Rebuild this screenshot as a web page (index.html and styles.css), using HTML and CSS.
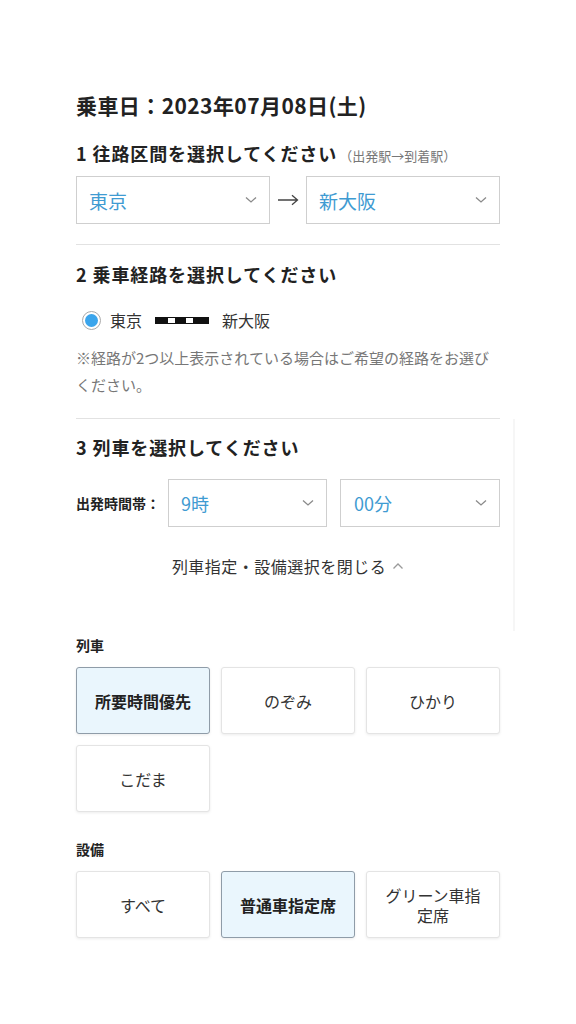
FILE: index.html
```html
<!DOCTYPE html>
<html lang="ja">
<head>
<meta charset="utf-8">
<title>列車選択</title>
<link rel="stylesheet" href="styles.css">
</head>
<body>
<div class="page">
  <h1 class="date">乗車日：2023年07月08日(土)</h1>

  <section class="sec sec1">
    <h2 class="heading">1 往路区間を選択してください<span class="sub">（出発駅→到着駅）</span></h2>
    <div class="route-select">
      <div class="select wide"><span class="val">東京</span><svg class="chev" viewBox="0 0 12 8" width="12" height="8"><path d="M1 1.5 L6 6 L11 1.5" fill="none" stroke="#8a8a8a" stroke-width="1.3"/></svg></div>
      <div class="arrow"><svg viewBox="0 0 22 12" width="22" height="12"><path d="M1 6 H20 M15 1.2 L20.5 6 L15 10.8" fill="none" stroke="#444" stroke-width="1.3"/></svg></div>
      <div class="select wide"><span class="val">新大阪</span><svg class="chev" viewBox="0 0 12 8" width="12" height="8"><path d="M1 1.5 L6 6 L11 1.5" fill="none" stroke="#8a8a8a" stroke-width="1.3"/></svg></div>
    </div>
  </section>

  <section class="sec sec2">
    <h2 class="heading">2 乗車経路を選択してください</h2>
    <div class="radio-row">
      <span class="radio"><span class="dot"></span></span>
      <span class="st">東京</span>
      <svg class="line" viewBox="0 0 54 7" width="54" height="7"><rect x="0.5" y="0.5" width="53" height="6" fill="#fff" stroke="#111"/><rect x="0" y="0" width="13" height="7" fill="#111"/><rect x="20" y="0" width="11" height="7" fill="#111"/><rect x="38" y="0" width="16" height="7" fill="#111"/></svg>
      <span class="st">新大阪</span>
    </div>
    <p class="note">※経路が2つ以上表示されている場合はご希望の経路をお選びください。</p>
  </section>

  <section class="sec sec3">
    <h2 class="heading">3 列車を選択してください</h2>
    <div class="time-row">
      <span class="time-label">出発時間帯：</span>
      <div class="select t1"><span class="val">9時</span><svg class="chev" viewBox="0 0 12 8" width="12" height="8"><path d="M1 1.5 L6 6 L11 1.5" fill="none" stroke="#8a8a8a" stroke-width="1.3"/></svg></div>
      <div class="select t2"><span class="val">00分</span><svg class="chev" viewBox="0 0 12 8" width="12" height="8"><path d="M1 1.5 L6 6 L11 1.5" fill="none" stroke="#8a8a8a" stroke-width="1.3"/></svg></div>
    </div>
    <div class="toggle">列車指定・設備選択を閉じる<svg class="caret" viewBox="0 0 12 8" width="12" height="8"><path d="M1.5 6.5 L6 2 L10.5 6.5" fill="none" stroke="#9a9a9a" stroke-width="1.3"/></svg></div>
  </section>

  <div class="group g1">
    <div class="glabel">列車</div>
    <div class="grid">
      <div class="opt on">所要時間優先</div>
      <div class="opt">のぞみ</div>
      <div class="opt">ひかり</div>
      <div class="opt">こだま</div>
    </div>
  </div>

  <div class="group g2">
    <div class="glabel">設備</div>
    <div class="grid">
      <div class="opt">すべて</div>
      <div class="opt on">普通車指定席</div>
      <div class="opt">グリーン車指定席</div>
    </div>
  </div>
</div>
</body>
</html>
```

FILE: styles.css
```css
* { box-sizing: border-box; }
html, body { margin: 0; padding: 0; background: #fff; }
body {
  font-family: "Noto Sans CJK JP", "Noto Sans", sans-serif;
  color: #333;
}
.page {
  width: 576px;
  padding: 90px 76px 60px;
}
.date {
  margin: 0;
  font-size: 21px;
  line-height: 30px;
  font-weight: 700;
  color: #222;
  letter-spacing: 0.02em;
}
.sec { margin: 0; }
.heading {
  margin: 0;
  font-size: 18px;
  line-height: 26px;
  font-weight: 700;
  color: #222;
  letter-spacing: 0.05em;
}
.sub {
  font-size: 13px;
  font-weight: 400;
  color: #777;
  letter-spacing: 0;
  margin-left: 2px;
}
.sec1 { padding-top: 20px; padding-bottom: 20px; border-bottom: 1px solid #e2e2e2; }
.route-select {
  display: flex;
  align-items: center;
  margin-top: 7px;
}
.select {
  height: 48px;
  border: 1px solid #cfcfcf;
  display: flex;
  align-items: center;
  justify-content: space-between;
  padding: 0 12px 0 12px;
  background: #fff;
}
.select .val {
  color: #3f9bd2;
  font-size: 19px;
}
.select.wide { width: 194px; }
.arrow {
  width: 36px;
  display: flex;
  justify-content: center;
  align-items: center;
}
.sec2 { padding-top: 16px; padding-bottom: 20px; border-bottom: 1px solid #e2e2e2; }
.radio-row {
  display: flex;
  align-items: center;
  height: 24px;
  margin-top: 21px;
  padding-left: 6px;
  font-size: 16px;
  color: #333;
}
.radio {
  width: 19px;
  height: 19px;
  border-radius: 50%;
  border: 1px solid #a9a9a9;
  display: flex;
  align-items: center;
  justify-content: center;
  margin-right: 9px;
}
.dot {
  width: 13px;
  height: 13px;
  border-radius: 50%;
  background: #3ba5ec;
}
.st { line-height: 24px; }
.line { margin: 0 13px 0 13px; }
.note {
  margin: 12px 0 0;
  font-size: 15px;
  line-height: 27px;
  color: #777;
}
.sec3 {
  padding-top: 15px;
  padding-bottom: 53px;
  margin-right: -15px;
  padding-right: 13px;
  border-right: 2px solid #f6f6f6;
}
.time-row {
  display: flex;
  align-items: center;
  margin-top: 19px;
}
.time-label {
  font-size: 14px;
  font-weight: 700;
  color: #222;
  width: 92px;
  white-space: nowrap;
}
.select.t1 { width: 159px; padding-left: 12px; }
.select.t2 { width: 160px; margin-left: 13px; padding-left: 13px; }
.select.t1 .val, .select.t2 .val { font-size: 18px; }
.toggle {
  margin-top: 27px;
  text-align: center;
  font-size: 16px;
  line-height: 24px;
  letter-spacing: 0.03em;
  color: #333;
  display: flex;
  justify-content: center;
  align-items: center;
}
.caret { margin-left: 6px; }
.group .glabel {
  font-size: 14px;
  line-height: 20px;
  font-weight: 700;
  color: #222;
}
.g1 { margin-top: 4px; }
.g2 { margin-top: 27px; }
.grid {
  display: grid;
  grid-template-columns: repeat(3, 134px);
  gap: 11px;
  margin-top: 12px;
}
.opt {
  height: 67px;
  border: 1px solid #e4e4e4;
  border-radius: 3px;
  background: #fff;
  box-shadow: 0 1px 3px rgba(0,0,0,0.08);
  display: flex;
  align-items: center;
  justify-content: center;
  text-align: center;
  padding: 0 14px;
  font-size: 16px;
  line-height: 20px;
  color: #333;
}
.opt.on {
  background: #eaf6fd;
  border-color: #8f9ca8;
  font-weight: 700;
  color: #222;
}
```
